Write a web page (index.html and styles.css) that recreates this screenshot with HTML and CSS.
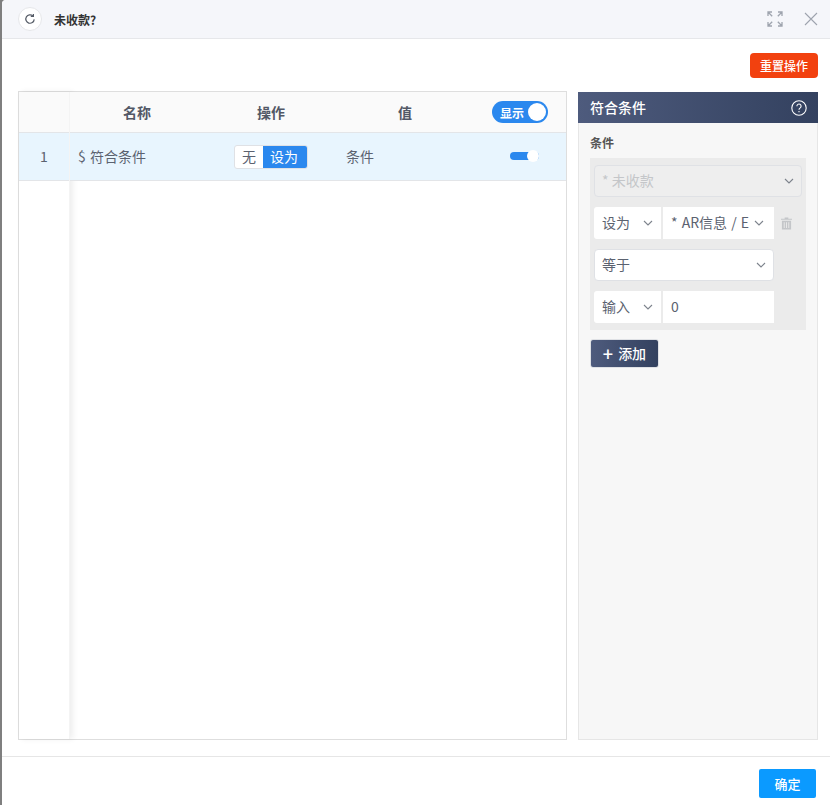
FILE: index.html
```html
<!DOCTYPE html>
<html lang="en">
<head>
  <meta charset="UTF-8">
  <title>未收款?</title>
  <link rel="stylesheet" href="styles.css">
</head>
<body>

<div class="dialog">
  <header class="dialog-head">
    <span class="refresh">
      <svg width="12" height="12" viewBox="0 0 12 12" fill="none" stroke="#555b66" stroke-width="1.2"><path d="M10.2 6.400A4.200 4.200 0 1 1 8.900 3"/><path d="M9.400 .9v2.600H6.800"/></svg>
    </span>
    <h1>未收款?</h1>
    <span class="head-tools">
      <svg width="16" height="16" viewBox="0 0 16 16" fill="none" stroke="#9ea4ae" stroke-width="1.3"><path d="M1 5V1h4M1 1l4.200 4.200M11 1h4v4M15 1l-4.200 4.200M1 11v4h4M1 15l4.200-4.200M15 11v4h-4M15 15l-4.200-4.200"/></svg>
      <svg width="14" height="14" viewBox="0 0 14 14" fill="none" stroke="#9ea4ae" stroke-width="1.1"><path d="M1 1l12 12M13 1L1 13"/></svg>
    </span>
  </header>

  <div class="toolbar">
    <button class="btn-reset">重置操作</button>
  </div>

  <main class="content">
    <!-- Table -->
    <section class="table">
      <div class="table-fixed">
        <div class="fixed-head"></div>
        <div class="fixed-cell">1</div>
      </div>
      <div class="table-main">
        <div class="table-row table-head">
          <div class="col">名称</div>
          <div class="col">操作</div>
          <div class="col">值</div>
          <div class="col col-switch">
            <span class="switch-big"><span>显示</span><i></i></span>
          </div>
        </div>
        <div class="table-row table-body">
          <div class="col col-left">$ 符合条件</div>
          <div class="col">
            <span class="toggle"><span>无</span><span class="on">设为</span></span>
          </div>
          <div class="col col-value">条件</div>
          <div class="col col-switch">
            <span class="switch-small"><i></i></span>
          </div>
        </div>
      </div>
    </section>

    <!-- Side panel -->
    <aside class="panel">
      <div class="panel-head">
        <span>符合条件</span>
        <svg width="16" height="16" viewBox="0 0 16 16" fill="none" stroke="#fff" stroke-width="1.1"><circle cx="8" cy="8" r="7.200"/><path d="M5.900 6.200a2.100 2.100 0 1 1 3.300 1.700c-.8.5-1.200.9-1.200 1.800"/><path d="M8 11v1.300"/></svg>
      </div>
      <div class="panel-body">
        <div class="panel-label">条件</div>
        <div class="cond">
          <div class="select select-disabled">
            <span class="select-text">* 未收款</span>
            <svg class="arrow" width="10" height="6" viewBox="0 0 10 6" fill="none" stroke="#7d838c" stroke-width="1.1"><path d="M1 1l4 4 4-4"/></svg>
          </div>
          <div class="cond-row">
            <div class="cell cell-type">
              <span class="select-text">设为</span>
              <svg class="arrow" width="10" height="6" viewBox="0 0 10 6" fill="none" stroke="#7d838c" stroke-width="1.1"><path d="M1 1l4 4 4-4"/></svg>
            </div>
            <div class="cell cell-value">
              <span class="select-text">* AR信息 / E</span>
              <svg class="arrow" width="10" height="6" viewBox="0 0 10 6" fill="none" stroke="#7d838c" stroke-width="1.1"><path d="M1 1l4 4 4-4"/></svg>
            </div>
            <svg class="trash" width="11" height="13" viewBox="0 0 12 13" fill="#c4c6c9"><path d="M4 0h4v1.200h4v1.200H0V1.200h4z"/><path d="M1 3.400h10V13H1zM3 5v6.400h1V5zm2.500 0v6.400h1V5zM8 5v6.400h1V5z" fill-rule="evenodd"/></svg>
          </div>
          <div class="select select-op">
            <span class="select-text">等于</span>
            <svg class="arrow" width="10" height="6" viewBox="0 0 10 6" fill="none" stroke="#7d838c" stroke-width="1.1"><path d="M1 1l4 4 4-4"/></svg>
          </div>
          <div class="cond-row">
            <div class="cell cell-type">
              <span class="select-text">输入</span>
              <svg class="arrow" width="10" height="6" viewBox="0 0 10 6" fill="none" stroke="#7d838c" stroke-width="1.1"><path d="M1 1l4 4 4-4"/></svg>
            </div>
            <div class="cell cell-value">
              <span class="select-text">0</span>
            </div>
          </div>
        </div>
        <button class="btn-add"><b>+</b> <span>添加</span></button>
      </div>
    </aside>
  </main>

  <footer class="dialog-foot">
    <button class="btn-ok">确定</button>
  </footer>
</div>

</body>
</html>
```

FILE: styles.css
```css
* {
  box-sizing: border-box;
}
html, body {
  height: 100%;
}
body {
  margin: 0;
  background: #7f7f7f;
  font-family: "Noto Sans CJK SC", "Noto Sans", sans-serif;
  font-size: 14px;
  color: #5b6270;
  overflow: hidden;
}
button {
  font-family: inherit;
  border: none;
  color: white;
  padding: 0;
}

.dialog {
  height: 805px;
  margin-left: 2px;
  background: white;
  border-top-left-radius: 4px;
  display: flex;
  flex-direction: column;
}

/* Header */
.dialog-head {
  height: 39px;
  flex: none;
  display: flex;
  align-items: center;
  padding: 0 12px 0 16px;
  background: #f5f6fa;
  border-bottom: 1px solid #e6e7ea;
  border-top-left-radius: 4px;
}
.refresh {
  width: 24px;
  height: 24px;
  border-radius: 50%;
  background: white;
  border: 1px solid #e6e7ea;
  display: flex;
  align-items: center;
  justify-content: center;
}
.dialog-head h1 {
  margin: 0 0 0 12px;
  font-size: 12px;
  font-weight: 700;
  color: #333;
}
.head-tools {
  margin-left: auto;
  display: flex;
  align-items: center;
  gap: 21px;
}

.toolbar {
  height: 53px;
  flex: none;
  display: flex;
  justify-content: flex-end;
  align-items: flex-start;
  padding: 14px 12px 0 0;
}
.btn-reset {
  width: 68px;
  height: 25px;
  background: #f2410f;
  border-radius: 4px;
  font-size: 12px;
  font-weight: 500;
}

.content {
  height: 648px;
  flex: none;
  display: flex;
  gap: 11px;
  padding: 0 12px 0 16px;
}

/* Table */
.table {
  width: 549px;
  flex: none;
  display: flex;
  border: 1px solid #dedede;
  margin-top: -1px;
  height: 649px;
}
.table-fixed {
  width: 51px;
  flex: none;
  border-right: 1px solid #f4f4f4;
  box-shadow: 3px 0 6px rgba(0,0,0,0.07);
}
.fixed-head {
  height: 41px;
  background: #fafafa;
  border-bottom: 1px solid #e3e5e8;
}
.fixed-cell {
  height: 48px;
  background: #e8f5fe;
  border-bottom: 1px solid #e3e5e8;
  display: flex;
  align-items: center;
  justify-content: center;
  padding-bottom: 2px;
}
.table-main {
  flex: 1;
}
.table-row {
  display: grid;
  grid-template-columns: 134px 134px 134px 1fr;
  border-bottom: 1px solid #e3e5e8;
}
.table-head {
  height: 41px;
  background: #fafafa;
  font-weight: 700;
  color: #525866;
}
.table-head .col {
  padding-bottom: 0;
}
.table-body {
  height: 48px;
  background: #e8f5fe;
}
.col {
  display: flex;
  align-items: center;
  justify-content: center;
  padding-bottom: 2px;
}
.col-left {
  justify-content: flex-start;
  padding-left: 8px;
  word-spacing: 1px;
}
.col-value {
  justify-content: flex-start;
  padding-left: 8px;
}
.table-body .col-switch {
  padding-bottom: 1px;
}
.switch-big {
  width: 56px;
  height: 22px;
  margin-left: 2px;
  border-radius: 11px;
  background: #2b88ee;
  display: flex;
  align-items: center;
  justify-content: space-between;
  padding: 0 2px 0 8px;
  color: white;
  font-size: 12px;
  font-weight: 700;
}
.switch-big i {
  width: 18px;
  height: 18px;
  border-radius: 50%;
  background: white;
}
.switch-small {
  width: 29px;
  height: 8px;
  margin-left: 10px;
  border-radius: 4px;
  background: #2b88ee;
  position: relative;
}
.switch-small i {
  position: absolute;
  right: 0;
  top: -2px;
  width: 12px;
  height: 12px;
  border-radius: 50%;
  background: white;
}
.toggle {
  display: flex;
  height: 24px;
  line-height: 21px;
  border-radius: 3px;
  overflow: hidden;
  background: white;
  border: 1px solid #dfe1e5;
  margin-top: 2px;
}
.toggle span {
  padding: 0 7px;
}
.toggle .on {
  background: #2b88ee;
  color: white;
  margin: -1px -1px -1px 0;
  padding: 0 10px 0 7px;
  line-height: 23px;
}

/* Side panel */
.panel {
  width: 240px;
  flex: none;
  display: flex;
  flex-direction: column;
  height: 648px;
  border: 1px solid #e6e6e6;
  border-top: none;
  background: #f7f7f7;
}
.panel-head {
  height: 31px;
  flex: none;
  margin: 0 -1px;
  padding: 0 11px 0 12px;
  display: flex;
  align-items: center;
  justify-content: space-between;
  background: linear-gradient(90deg, #4e5b7d, #33415f);
  color: white;
  font-weight: 500;
}
.panel-head span {
  margin-bottom: 2px;
}
.panel-body {
  padding: 11px 11px 0;
}
.panel-label {
  font-size: 12px;
  font-weight: 700;
  line-height: 18px;
  color: #555;
  margin-bottom: 6px;
}
.cond {
  width: 216px;
  height: 172px;
  background: #ebebeb;
  padding: 7px 4px;
  display: flex;
  flex-direction: column;
  gap: 10px;
}
.select {
  height: 32px;
  display: flex;
  align-items: center;
  justify-content: space-between;
  padding: 0 7px;
  border: 1px solid #dfe1e5;
  border-radius: 4px;
  background: white;
}
.select-disabled {
  background: #eeeeee;
  color: #c4c6c9;
}
.select-op {
  width: 180px;
}
.select-text {
  white-space: nowrap;
  overflow: hidden;
  margin-bottom: 2px;
}
.arrow {
  flex: none;
}
.cond-row {
  display: flex;
  align-items: center;
  gap: 2px;
}
.cell {
  height: 32px;
  display: flex;
  align-items: center;
  justify-content: space-between;
  background: white;
  padding: 0 8px;
}
.cell-type {
  width: 67px;
  border-radius: 3px 0 0 3px;
}
.cell-value {
  width: 111px;
  padding-right: 10px;
  gap: 3px;
}
.cell-value .select-text {
  flex: 1;
  word-spacing: 1px;
}
.trash {
  margin-left: 5px;
  flex: none;
}
.btn-add {
  display: flex;
  align-items: center;
  justify-content: center;
  gap: 5px;
  width: 69px;
  height: 29px;
  margin-top: 9px;
  padding-bottom: 2px;
  border-radius: 3px;
  background: linear-gradient(90deg, #4e5b7d, #33415f);
  border: 1px solid #dfe1e5;
  font-size: 14px;
  font-weight: 500;
}
.btn-add b {
  font-size: 18px;
  font-weight: 500;
  line-height: 14px;
}

/* Footer */
.dialog-foot {
  flex: 1;
  margin-top: 16px;
  border-top: 1px solid #e6e6e6;
  display: flex;
  justify-content: flex-end;
  align-items: flex-start;
  padding: 12px 14px 0 0;
}
.btn-ok {
  width: 57px;
  height: 29px;
  background: #0b9aff;
  border-radius: 2px;
  font-size: 13px;
  font-weight: 500;
}
```
